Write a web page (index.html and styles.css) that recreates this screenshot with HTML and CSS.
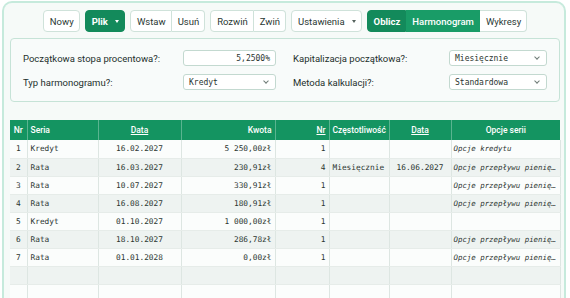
FILE: index.html
```html
<!DOCTYPE html>
<html lang="pl">
<head>
    <meta charset="UTF-8">
    <title>Harmonogram</title>
    <link rel="stylesheet" href="styles.css">
</head>
<body>
    <div class="app">
        <div class="toolbar">
            <button class="btn">Nowy</button>
            <button class="btn btn-green">Plik <span class="caret"></span></button>
            <div class="btn-group">
                <button class="btn">Wstaw</button>
                <button class="btn">Usuń</button>
            </div>
            <div class="btn-group">
                <button class="btn">Rozwiń</button>
                <button class="btn">Zwiń</button>
            </div>
            <button class="btn">Ustawienia <span class="caret caret-dark"></span></button>
            <div class="btn-group">
                <button class="btn btn-green">Oblicz</button>
                <button class="btn btn-green btn-active">Harmonogram</button>
                <button class="btn">Wykresy</button>
            </div>
        </div>

        <div class="panel">
            <label class="form-label">Początkowa stopa procentowa?:</label>
            <div class="field field-input">5,2500%</div>
            <label class="form-label form-label-right">Kapitalizacja początkowa?:</label>
            <div class="field field-select">Miesięcznie<span class="chevron"></span></div>

            <label class="form-label">Typ harmonogramu?:</label>
            <div class="field field-select">Kredyt<span class="chevron"></span></div>
            <label class="form-label form-label-right">Metoda kalkulacji?:</label>
            <div class="field field-select">Standardowa<span class="chevron"></span></div>
        </div>

        <table class="schedule">
            <colgroup>
                <col style="width: 17px">
                <col style="width: 71px">
                <col style="width: 83px">
                <col style="width: 94px">
                <col style="width: 54px">
                <col style="width: 60px">
                <col style="width: 62px">
                <col style="width: 109px">
            </colgroup>
            <thead>
                <tr>
                    <th class="c">Nr</th>
                    <th class="l">Seria</th>
                    <th class="c"><a>Data</a></th>
                    <th class="r">Kwota</th>
                    <th class="r"><a>Nr</a></th>
                    <th class="l">Częstotliwość</th>
                    <th class="c"><a>Data</a></th>
                    <th class="c">Opcje serii</th>
                </tr>
            </thead>
            <tbody>
                <tr>
                    <td class="c">1</td><td>Kredyt</td><td class="c">16.02.2027</td><td class="r">5 250,00zł</td>
                    <td class="r">1</td><td></td><td></td><td class="opt">Opcje kredytu</td>
                </tr>
                <tr>
                    <td class="c">2</td><td>Rata</td><td class="c">16.03.2027</td><td class="r">230,91zł</td>
                    <td class="r">4</td><td>Miesięcznie</td><td class="c">16.06.2027</td><td class="opt">Opcje przepływu pieniężnego</td>
                </tr>
                <tr>
                    <td class="c">3</td><td>Rata</td><td class="c">10.07.2027</td><td class="r">330,91zł</td>
                    <td class="r">1</td><td></td><td></td><td class="opt">Opcje przepływu pieniężnego</td>
                </tr>
                <tr>
                    <td class="c">4</td><td>Rata</td><td class="c">16.08.2027</td><td class="r">180,91zł</td>
                    <td class="r">1</td><td></td><td></td><td class="opt">Opcje przepływu pieniężnego</td>
                </tr>
                <tr>
                    <td class="c">5</td><td>Kredyt</td><td class="c">01.10.2027</td><td class="r">1 000,00zł</td>
                    <td class="r">1</td><td></td><td></td><td class="opt"></td>
                </tr>
                <tr>
                    <td class="c">6</td><td>Rata</td><td class="c">18.10.2027</td><td class="r">286,78zł</td>
                    <td class="r">1</td><td></td><td></td><td class="opt">Opcje przepływu pieniężnego</td>
                </tr>
                <tr>
                    <td class="c">7</td><td>Rata</td><td class="c">01.01.2028</td><td class="r">0,00zł</td>
                    <td class="r">1</td><td></td><td></td><td class="opt">Opcje przepływu pieniężnego</td>
                </tr>
                <tr>
                    <td></td><td></td><td></td><td></td><td></td><td></td><td></td><td></td>
                </tr>
                <tr>
                    <td></td><td></td><td></td><td></td><td></td><td></td><td></td><td></td>
                </tr>
            </tbody>
        </table>
    </div>
</body>
</html>
```

FILE: styles.css
```css
* {
    margin: 0;
    padding: 0;
    box-sizing: border-box;
}

body {
    background: #fff;
    font-family: 'Roboto', 'Liberation Sans', sans-serif;
    color: #22302b;
    overflow: hidden;
}

.app {
    margin: 1px 4px 0 2px;
    height: 320px;
    border: 2px solid #c6eadc;
    border-bottom: none;
    border-radius: 10px 10px 0 0;
    background: #f6faf8;
    padding: 7px 4px 0 6px;
}

/* toolbar */

.toolbar {
    display: flex;
    justify-content: center;
    gap: 5px;
    height: 22px;
}

.btn-group {
    display: flex;
}

.btn {
    height: 22px;
    padding: 0 5px 0 6px;
    background: #fff;
    border: 1px solid #cfe2da;
    border-radius: 4px;
    font-family: inherit;
    font-size: 9.5px;
    color: #2a3833;
    display: flex;
    align-items: center;
    gap: 7px;
}

.btn-group .btn {
    border-radius: 0;
}

.btn-group .btn + .btn {
    border-left: none;
}

.btn-group .btn:first-child {
    border-radius: 4px 0 0 4px;
}

.btn-group .btn:last-child {
    border-radius: 0 4px 4px 0;
}

.btn-green {
    background: #138a5b;
    border-color: #138a5b;
    color: #fff;
    font-weight: 700;
}

.btn-active {
    background: #199c67;
    border-color: #199c67;
    font-weight: 500;
}

.caret {
    width: 0;
    height: 0;
    border-left: 2px solid transparent;
    border-right: 2px solid transparent;
    border-top: 3px solid #fff;
}

.caret-dark {
    border-top-color: #55625d;
}

/* form panel */

.panel {
    margin-top: 6px;
    height: 64px;
    border: 1px solid #c6e3d7;
    border-radius: 4px;
    background: #f8fbfa;
    padding: 11px 12px 0 12px;
    display: grid;
    grid-template-columns: 160px 93px 173px 98px;
    grid-auto-rows: 16px;
    row-gap: 8px;
    align-items: center;
}

.form-label {
    font-size: 9.5px;
    color: #24302c;
}

.form-label-right {
    padding-left: 17px;
}

.field {
    height: 16px;
    border: 1px solid #c3d9d0;
    border-radius: 3px;
    background: #fff;
    font-family: 'DejaVu Sans Mono', monospace;
    font-size: 8px;
    color: #2a3531;
    display: flex;
    align-items: center;
    padding: 0 5px;
    position: relative;
}

.field-input {
    justify-content: flex-end;
}

.chevron {
    position: absolute;
    right: 7px;
    top: 4px;
    width: 4px;
    height: 4px;
    border-right: 1px solid #6f7c77;
    border-bottom: 1px solid #6f7c77;
    transform: rotate(45deg);
}

/* table */

.schedule {
    margin-top: 18px;
    width: 550px;
    border-collapse: collapse;
    table-layout: fixed;
}

.schedule th {
    height: 20px;
    background: #149461;
    color: #fff;
    font-size: 8.5px;
    font-weight: 500;
    padding: 0 3px;
    border-left: 1px solid rgba(255, 255, 255, 0.3);
    white-space: nowrap;
}

.schedule th:first-child {
    border-left: none;
}

.schedule th a {
    text-decoration: underline;
}

.schedule td {
    height: 18px;
    font-family: 'DejaVu Sans Mono', monospace;
    font-size: 7.8px;
    color: #2c3632;
    padding: 0 3px;
    border-left: 1px solid #dde6e2;
    border-bottom: 1px solid #e6ece9;
    white-space: nowrap;
    overflow: hidden;
    text-overflow: ellipsis;
}

.schedule td:first-child {
    border-left: none;
}

.schedule td:last-child {
    border-right: 1px solid #dde6e2;
}

.schedule tbody tr:nth-child(odd) td {
    background: #fbfdfc;
}

.schedule tbody tr:nth-child(even) td {
    background: #eef3f1;
}

.l {
    text-align: left;
}

.c {
    text-align: center;
}

.r {
    text-align: right;
}

.schedule .opt {
    font-style: italic;
    font-size: 7.4px;
    padding: 0 2px;
}
```
